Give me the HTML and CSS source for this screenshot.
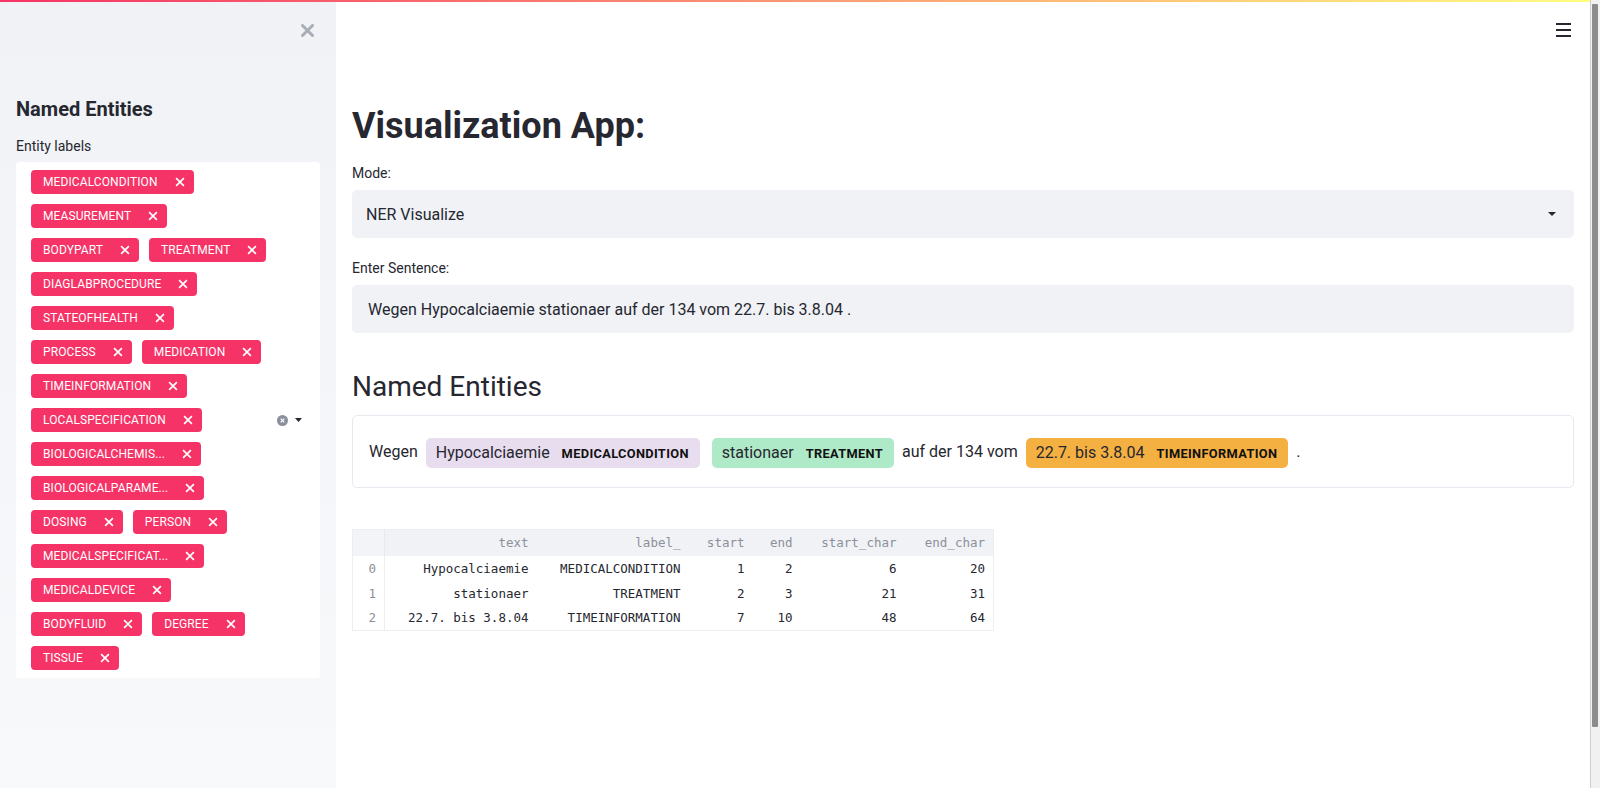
FILE: index.html
```html
<!DOCTYPE html>
<html lang="de">
<head>
<meta charset="utf-8">
<title>Visualization App</title>
<link rel="stylesheet" href="styles.css">
</head>
<body>
<div class="app">
  <div class="frame">
    <div class="decoration"></div>
    <aside class="sidebar">
      <div class="sidebar-top">
        <svg class="close" width="13" height="13" viewBox="0 0 13 13"><path d="M1.5 1.5l10 10M11.5 1.5l-10 10" stroke="#a9adb8" stroke-width="3" stroke-linecap="round"/></svg>
      </div>
      <h3 class="side-title">Named Entities</h3>
      <div class="field-label">Entity labels</div>
      <div class="multiselect">
        <div class="tags">
          <div class="tag-row"><span class="tag">MEDICALCONDITION<svg class="tx" viewBox="0 0 9 9"><path d="M1 1l7 7M8 1l-7 7"/></svg></span></div>
          <div class="tag-row"><span class="tag">MEASUREMENT<svg class="tx" viewBox="0 0 9 9"><path d="M1 1l7 7M8 1l-7 7"/></svg></span></div>
          <div class="tag-row"><span class="tag">BODYPART<svg class="tx" viewBox="0 0 9 9"><path d="M1 1l7 7M8 1l-7 7"/></svg></span><span class="tag">TREATMENT<svg class="tx" viewBox="0 0 9 9"><path d="M1 1l7 7M8 1l-7 7"/></svg></span></div>
          <div class="tag-row"><span class="tag">DIAGLABPROCEDURE<svg class="tx" viewBox="0 0 9 9"><path d="M1 1l7 7M8 1l-7 7"/></svg></span></div>
          <div class="tag-row"><span class="tag">STATEOFHEALTH<svg class="tx" viewBox="0 0 9 9"><path d="M1 1l7 7M8 1l-7 7"/></svg></span></div>
          <div class="tag-row"><span class="tag">PROCESS<svg class="tx" viewBox="0 0 9 9"><path d="M1 1l7 7M8 1l-7 7"/></svg></span><span class="tag">MEDICATION<svg class="tx" viewBox="0 0 9 9"><path d="M1 1l7 7M8 1l-7 7"/></svg></span></div>
          <div class="tag-row"><span class="tag">TIMEINFORMATION<svg class="tx" viewBox="0 0 9 9"><path d="M1 1l7 7M8 1l-7 7"/></svg></span></div>
          <div class="tag-row"><span class="tag">LOCALSPECIFICATION<svg class="tx" viewBox="0 0 9 9"><path d="M1 1l7 7M8 1l-7 7"/></svg></span></div>
          <div class="tag-row"><span class="tag">BIOLOGICALCHEMIS...<svg class="tx" viewBox="0 0 9 9"><path d="M1 1l7 7M8 1l-7 7"/></svg></span></div>
          <div class="tag-row"><span class="tag">BIOLOGICALPARAME...<svg class="tx" viewBox="0 0 9 9"><path d="M1 1l7 7M8 1l-7 7"/></svg></span></div>
          <div class="tag-row"><span class="tag">DOSING<svg class="tx" viewBox="0 0 9 9"><path d="M1 1l7 7M8 1l-7 7"/></svg></span><span class="tag">PERSON<svg class="tx" viewBox="0 0 9 9"><path d="M1 1l7 7M8 1l-7 7"/></svg></span></div>
          <div class="tag-row"><span class="tag">MEDICALSPECIFICAT...<svg class="tx" viewBox="0 0 9 9"><path d="M1 1l7 7M8 1l-7 7"/></svg></span></div>
          <div class="tag-row"><span class="tag">MEDICALDEVICE<svg class="tx" viewBox="0 0 9 9"><path d="M1 1l7 7M8 1l-7 7"/></svg></span></div>
          <div class="tag-row"><span class="tag">BODYFLUID<svg class="tx" viewBox="0 0 9 9"><path d="M1 1l7 7M8 1l-7 7"/></svg></span><span class="tag">DEGREE<svg class="tx" viewBox="0 0 9 9"><path d="M1 1l7 7M8 1l-7 7"/></svg></span></div>
          <div class="tag-row"><span class="tag">TISSUE<svg class="tx" viewBox="0 0 9 9"><path d="M1 1l7 7M8 1l-7 7"/></svg></span></div>
        </div>
        <div class="ms-icons">
          <svg width="11" height="11" viewBox="0 0 11 11"><circle cx="5.5" cy="5.5" r="5.5" fill="#8b8f9b"/><path d="M3.7 3.7l3.6 3.6M7.3 3.7l-3.6 3.6" stroke="#fff" stroke-width="1.2"/></svg>
          <svg width="7" height="4" viewBox="0 0 7 4"><path d="M0 0h7L3.5 4z" fill="#262730"/></svg>
        </div>
      </div>
    </aside>
    <main class="main">
      <div class="toolbar">
        <svg width="15" height="14" viewBox="0 0 15 14"><path d="M0 1h15M0 7h15M0 13h15" stroke="#262730" stroke-width="2"/></svg>
      </div>
      <div class="block">
        <h1 class="title">Visualization App:</h1>
        <div class="label label-first">Mode:</div>
        <div class="select">
          <span>NER Visualize</span>
          <svg width="8" height="4" viewBox="0 0 8 4"><path d="M0 0h8L4 4z" fill="#262730"/></svg>
        </div>
        <div class="label">Enter Sentence:</div>
        <div class="input">Wegen Hypocalciaemie stationaer auf der 134 vom 22.7. bis 3.8.04 .</div>
        <h2 class="subtitle">Named Entities</h2>
        <div class="ents">Wegen <mark class="ent ent-med">Hypocalciaemie <span class="ent-label">MEDICALCONDITION</span></mark> <mark class="ent ent-treat">stationaer <span class="ent-label">TREATMENT</span></mark> auf der 134 vom <mark class="ent ent-time">22.7. bis 3.8.04 <span class="ent-label">TIMEINFORMATION</span></mark> .</div>
        <table class="df">
          <colgroup>
            <col class="c-idx"><col class="c-text"><col class="c-label"><col class="c-start"><col class="c-end"><col class="c-sc"><col class="c-ec">
          </colgroup>
          <thead>
            <tr><th></th><th>text</th><th>label_</th><th>start</th><th>end</th><th>start_char</th><th>end_char</th></tr>
          </thead>
          <tbody>
            <tr><th>0</th><td>Hypocalciaemie</td><td>MEDICALCONDITION</td><td>1</td><td>2</td><td>6</td><td>20</td></tr>
            <tr><th>1</th><td>stationaer</td><td>TREATMENT</td><td>2</td><td>3</td><td>21</td><td>31</td></tr>
            <tr><th>2</th><td>22.7. bis 3.8.04</td><td>TIMEINFORMATION</td><td>7</td><td>10</td><td>48</td><td>64</td></tr>
          </tbody>
        </table>
      </div>
    </main>
  </div>
  <div class="scrollbar"><div class="thumb"></div></div>
</div>
</body>
</html>
```
FILE: styles.css
```css
* { box-sizing: border-box; }
html, body { margin: 0; padding: 0; }
body {
  font-family: Roboto, "Noto Sans", sans-serif;
  color: #262730;
  background: #fff;
}
.app {
  display: flex;
  height: 788px;
  overflow: hidden;
}
.frame {
  position: relative;
  flex: 1;
  display: flex;
  min-width: 0;
}
.decoration {
  position: absolute;
  top: 0;
  left: 0;
  right: 0;
  height: 2px;
  background: linear-gradient(90deg, #f63366, #fffd80);
  z-index: 3;
}

/* Sidebar */
.sidebar {
  width: 336px;
  flex: none;
  padding: 0 16px;
  background: linear-gradient(180deg, #f0f2f6, #f8f9fb);
}
.sidebar-top {
  height: 95px;
  display: flex;
  justify-content: flex-end;
  align-items: flex-start;
  padding-top: 24px;
  padding-right: 6px;
}
.side-title {
  margin: 0;
  font-size: 20px;
  line-height: 28px;
  font-weight: 700;
}
.field-label {
  margin-top: 13px;
  font-size: 14px;
  line-height: 20px;
  margin-bottom: 6px;
}
.multiselect {
  background: #fff;
  border-radius: 4px;
  padding: 8px 18px 8px 15px;
  display: flex;
  align-items: center;
}
.tags {
  flex: 1;
  display: flex;
  flex-direction: column;
  gap: 10px;
}
.tag-row {
  display: flex;
  gap: 10px;
}
.tag {
  display: inline-flex;
  align-items: center;
  height: 24px;
  padding: 0 9px 0 12px;
  background: #f63366;
  color: #fff;
  border-radius: 4px;
  font-size: 12px;
  letter-spacing: 0.1px;
  white-space: nowrap;
}
.tx {
  width: 10px;
  height: 10px;
  margin-left: 17px;
  stroke: #fff;
  stroke-width: 1.5;
  fill: none;
}
.ms-icons {
  display: flex;
  align-items: center;
  gap: 7px;
}
.ms-icons svg { display: block; }

/* Main */
.main {
  flex: 1;
  min-width: 0;
  background: #fff;
  padding: 0 16px;
}
.toolbar {
  height: 60px;
  display: flex;
  justify-content: flex-end;
  align-items: flex-start;
  padding-top: 23px;
  padding-right: 3px;
}
.toolbar svg { display: block; }
.block {
  padding-top: 44px;
}
.title {
  margin: 0;
  font-size: 36px;
  line-height: 44px;
  font-weight: 700;
}
.label {
  font-size: 14px;
  line-height: 20px;
  margin-top: 20px;
  margin-bottom: 7px;
}
.label-first { margin-top: 15px; }
.select, .input {
  height: 48px;
  background: #f0f2f6;
  border-radius: 5px;
  display: flex;
  align-items: center;
  font-size: 16px;
}
.select {
  padding: 0 18px 0 14px;
  justify-content: space-between;
}
.select svg { display: block; }
.input {
  padding: 0 16px;
}
.subtitle {
  margin: 36px 0 10px;
  font-size: 28px;
  line-height: 36px;
  font-weight: 400;
}
.ents {
  border: 1px solid #e6e9ef;
  border-radius: 5px;
  padding: 16px;
  font-size: 16px;
  line-height: 40px;
  height: 73px;
  white-space: nowrap;
}
.ent {
  display: inline-block;
  height: 30px;
  line-height: 30px;
  padding: 0 11px 0 10px;
  margin: 0 4px;
  border-radius: 5px;
  color: #262730;
  vertical-align: middle;
}
.ent-med { background: #e8dcef; }
.ent-treat { background: #aeeac8; }
.ent-time { background: #f5b042; }
.ent-label {
  font-size: 12.8px;
  font-weight: 700;
  margin-left: 8px;
  letter-spacing: 0.35px;
  text-transform: uppercase;
  color: #111;
}

/* Dataframe */
.df {
  margin-top: 41px;
  border-collapse: collapse;
  table-layout: fixed;
  width: 641px;
  font-family: "DejaVu Sans Mono", "Liberation Mono", monospace;
  font-size: 12.5px;
  border: 1px solid #eceef2;
}
.c-idx { width: 32px; }
.c-text { width: 152px; }
.c-label { width: 152px; }
.c-start { width: 64px; }
.c-end { width: 48px; }
.c-sc { width: 104px; }
.c-ec { width: 89px; }
.df th, .df td {
  text-align: right;
  padding: 0 8px 0 0;
  white-space: nowrap;
  font-weight: 400;
}
.df thead tr {
  height: 26px;
  background: #f0f2f6;
}
.df thead th { color: #8d909a; }
.df tbody tr { height: 25px; }
.df tbody th {
  color: #8d909a;
  border-right: 1px solid #eceef2;
}
.df thead th:first-child { border-right: 1px solid #e6e9ef; background: #f3f4f7; }
.df td { color: #262730; }

/* Scrollbar */
.scrollbar {
  width: 10px;
  flex: none;
  background: #f1f1f1;
  border-left: 1px solid #cfcfcf;
  padding: 4px 2px 61px 1px;
}
.thumb {
  height: 100%;
  background: #8a8c8c;
  border-radius: 1px;
}
```
